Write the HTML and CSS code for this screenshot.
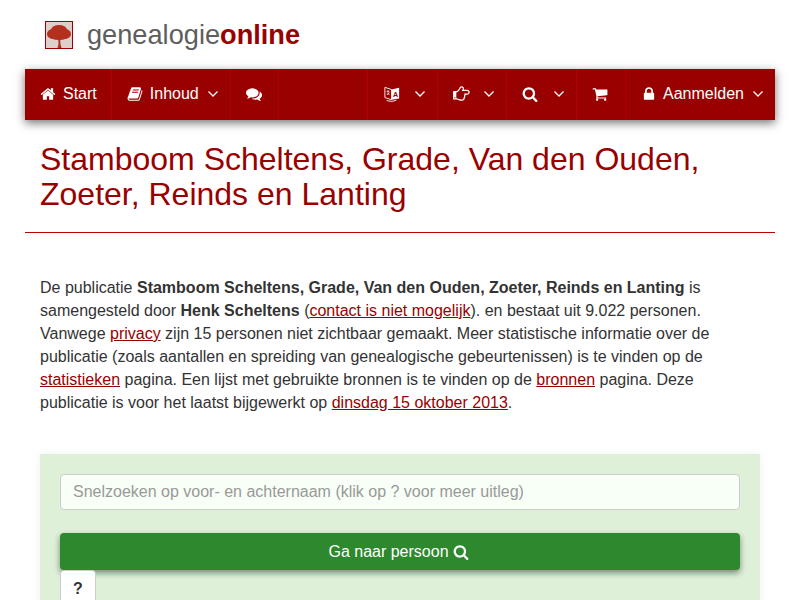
FILE: index.html
```html
<!DOCTYPE html>
<html lang="nl">
<head>
    <meta charset="UTF-8">
    <meta name="viewport" content="width=device-width, initial-scale=1.0">
    <title>Stamboom Scheltens, Grade, Van den Ouden, Zoeter, Reinds en Lanting</title>
    <link rel="stylesheet" href="styles.css">
</head>

<body>
    <div class="container">
        <!-- Logo -->
        <div class="brand">
            <svg class="brand-logo" viewBox="0 0 26 26">
                <rect width="26" height="26" fill="#dfcfcb"/>
                <g class="tree">
                    <ellipse cx="13" cy="8" rx="8" ry="5"/>
                    <ellipse cx="7" cy="12" rx="6" ry="5"/>
                    <ellipse cx="19" cy="12" rx="6" ry="5"/>
                    <ellipse cx="13" cy="14" rx="10" ry="4"/>
                    <path d="M12 14h2l.5 8 1 4h-4l1-4z"/>
                </g>
            </svg>
            <span class="brand-name">genealogie<b>online</b></span>
        </div>

        <!-- Navigation -->
        <nav class="navbar">
            <a class="nav-item nav-start">
                <svg class="icon" viewBox="0 0 1792 1792"><path d="M1472 992v480q0 26-19 45t-45 19h-384v-384h-256v384h-384q-26 0-45-19t-19-45v-480q0-1 .5-3t.5-3l575-474 575 474q1 2 1 6zm223-69l-62 74q-8 9-21 11h-3q-13 0-21-7l-692-577-692 577q-12 8-24 7-13-2-21-11l-62-74q-8-10-7-23.5t11-21.5l719-599q32-26 76-26t76 26l244 204v-195q0-14 9-23t23-9h192q14 0 23 9t9 23v408l219 182q10 8 11 21.5t-7 23.5z"/></svg>
                <span class="nav-label">Start</span>
            </a>
            <a class="nav-item">
                <svg class="icon" viewBox="0 0 1792 1792"><path d="M1703 478q40 57 18 129l-275 906q-19 64-76.5 107.5t-122.5 43.5h-923q-77 0-148.5-53.5t-99.5-131.5q-24-67-2-127 0-4 3-27t4-37q1-8-3-21.5t-3-19.5q2-11 8-21t16.5-23.5 16.5-23.5q23-38 45-91.5t30-91.5q3-10 .5-30t-.5-28q3-11 17-28t17-23q21-36 42-92t25-90q1-9-2.5-32t.5-28q4-13 22-30.5t22-22.5q19-26 42.5-84.5t27.5-96.5q1-8-3-25.5t-2-26.5q2-8 9-18t18-23 17-21q8-12 16.5-30.5t15-35 16-36 19.5-32 26.5-23.5 36-11.5 47.5 5.5l-1 3q38-9 51-9h761q74 0 114 56t18 130l-274 906q-36 119-71.5 153.5t-128.5 34.5h-869q-27 0-38 15-11 16-1 43 24 70 144 70h923q29 0 56-15.5t35-41.5l300-987q7-22 5-57 38 15 59 43zm-1064 2q-4 13 2 22.5t20 9.5h608q13 0 25.5-9.5t16.5-22.5l21-64q4-13-2-22.5t-20-9.5h-608q-13 0-25.5 9.5t-16.5 22.5zm-83 256q-4 13 2 22.5t20 9.5h608q13 0 25.5-9.5t16.5-22.5l21-64q4-13-2-22.5t-20-9.5h-608q-13 0-25.5 9.5t-16.5 22.5z"/></svg>
                <span class="nav-label">Inhoud</span>
                <svg class="caret" viewBox="0 0 12 8"><path d="M1.500 1.500L6 6l4.500-4.500"/></svg>
            </a>
            <a class="nav-item nav-comments">
                <svg class="icon" viewBox="0 0 1792 1792"><path d="M1408 768q0 139-94 257t-256.500 186.500-353.500 68.500q-86 0-176-16-124 88-278 128-36 9-86 16h-3q-11 0-20.500-8t-11.500-21q-1-3-1-6.500t.5-6.500 2-6l2.500-5 3.500-5.500 4-5 4.500-5 4-4.500q5-6 23-25t26-29.500 22.500-29 25-38.500 20.500-44q-124-72-195-177t-71-224q0-139 94-257t256.500-186.500 353.500-68.500 353.500 68.500 256.500 186.500 94 257zm384 256q0 120-71 224.500t-195 176.500q10 24 20.500 44t25 38.500 22.500 29 26 29.500 23 25q1 1 4 4.500t4.500 5 4 5 3.500 5.500l2.500 5 2 6 .5 6.500-1 6.500q-3 14-13 22t-22 7q-50-7-86-16-154-40-278-128-90 16-176 16-271 0-472-132 58 4 88 4 161 0 309-45t264-129q125-92 192-212t67-254q0-77-23-152 129 71 204 178t75 230z"/></svg>
            </a>

            <a class="nav-item nav-lang">
                <svg class="icon icon-lang" viewBox="0 0 18 20">
                    <path class="lang-page" d="M1 2.500l7.500 2.500v11.500L1 14z"/>
                    <path class="lang-page" d="M3 7h3M4.500 6v1M3.500 11l2.500-3M4 8.500l2 2.500M3 17.500q6 2 11-.500"/>
                    <path class="lang-solid" d="M8.500 5L17 3v12l-8.500 1.500z"/>
                    <text class="lang-letter" x="10" y="13">A</text>
                </svg>
                <svg class="caret" viewBox="0 0 12 8"><path d="M1.500 1.500L6 6l4.500-4.500"/></svg>
            </a>
            <a class="nav-item">
                <svg class="icon icon-hand" viewBox="0 0 1792 1792"><path d="M256 1344q0-26-19-45t-45-19-45 19-19 45 19 45 45 19 45-19 19-45zm1376-576q0-51-39-89.500t-89-38.500h-576q0-20 15-48.500t33-55 33-68 15-84.500q0-67-44.500-97.500t-115.500-30.500q-24 0-90 139-24 44-37 65-40 64-112 145-71 81-101 106-69 57-140 57h-32v640h32q72 0 167 32t193.500 64 179.500 32q189 0 189-167 0-26-5-56 30-16 47.500-52.500t17.500-73.500-18-69q53-50 53-119 0-25-10-55.500t-25-47.500h331q52 0 90-38t38-90zm128-1q0 105-75.500 181t-180.500 76h-169q-4 62-37 119 3 21 3 43 0 101-60 178 1 139-85 219.500t-227 80.500q-133 0-322-69-164-59-223-59h-288q-53 0-90.500-37.500t-37.500-90.500v-640q0-53 37.500-90.500t90.500-37.500h288q10 0 21.500-4.500t23.500-14 22.500-18 24-22.500 20.500-21.500 19-21.500 14-17q65-74 100-129 13-21 33-62t37-72 40.500-63 55-49.500 69.500-17.500q125 0 206.500 67t81.500 189q0 68-22 128h374q104 0 180 76t76 179z"/></svg>
                <svg class="caret" viewBox="0 0 12 8"><path d="M1.500 1.500L6 6l4.500-4.500"/></svg>
            </a>
            <a class="nav-item">
                <svg class="icon" viewBox="0 0 1792 1792"><path d="M1216 832q0-185-131.500-316.500t-316.500-131.500-316.500 131.500-131.500 316.500 131.500 316.500 316.500 131.500 316.500-131.500 131.500-316.500zm512 832q0 52-38 90t-90 38q-54 0-90-38l-343-342q-179 124-399 124-143 0-273.500-55.500t-225-150-150-225-55.500-273.500 55.500-273.500 150-225 225-150 273.500-55.500 273.500 55.500 225 150 150 225 55.500 273.500q0 220-124 399l343 343q37 37 37 90z"/></svg>
                <svg class="caret" viewBox="0 0 12 8"><path d="M1.500 1.500L6 6l4.500-4.500"/></svg>
            </a>
            <a class="nav-item nav-cart">
                <svg class="icon" viewBox="0 0 1792 1792"><path d="M704 1536q0 52-38 90t-90 38-90-38-38-90 38-90 90-38 90 38 38 90zm896 0q0 52-38 90t-90 38-90-38-38-90 38-90 90-38 90 38 38 90zm128-1088v512q0 24-16.500 42.500t-40.500 21.500l-1044 122q13 60 13 70 0 16-24 64h920q26 0 45 19t19 45-19 45-45 19h-1024q-26 0-45-19t-19-45q0-11 8-31.500t16-36 21.500-40 15.500-29.500l-177-823h-204q-26 0-45-19t-19-45 19-45 45-19h256q16 0 28.500 6.500t19.500 15.500 13 24.500 8 26 5.500 29.500 4.500 26h1201q26 0 45 19t19 45z"/></svg>
            </a>
            <a class="nav-item nav-login">
                <svg class="icon" viewBox="0 0 1792 1792"><path d="M640 768h512v-192q0-106-75-181t-181-75-181 75-75 181v192zm832 96v576q0 40-28 68t-68 28h-960q-40 0-68-28t-28-68v-576q0-40 28-68t68-28h32v-192q0-184 132-316t316-132 316 132 132 316v192h32q40 0 68 28t28 68z"/></svg>
                <span class="nav-label nav-label-login">Aanmelden</span>
                <svg class="caret" viewBox="0 0 12 8"><path d="M1.500 1.500L6 6l4.500-4.500"/></svg>
            </a>
        </nav>

        <h1 class="page-title">Stamboom Scheltens, Grade, Van den Ouden, Zoeter, Reinds en Lanting</h1>

        <p class="intro">
            De publicatie <b>Stamboom Scheltens, Grade, Van den Ouden, Zoeter, Reinds en Lanting</b> is
            samengesteld door <b>Henk Scheltens</b> (<a href="#">contact is niet mogelijk</a>). en bestaat uit 9.022 personen.
            Vanwege <a href="#">privacy</a> zijn 15 personen niet zichtbaar gemaakt. Meer statistische informatie over de
            publicatie (zoals aantallen en spreiding van genealogische gebeurtenissen) is te vinden op de
            <a href="#">statistieken</a> pagina. Een lijst met gebruikte bronnen is te vinden op de <a href="#">bronnen</a> pagina. Deze
            publicatie is voor het laatst bijgewerkt op <a href="#">dinsdag 15 oktober 2013</a>.
        </p>

        <!-- Quick search -->
        <form class="search-panel">
            <input class="search-input" type="text" placeholder="Snelzoeken op voor- en achternaam (klik op ? voor meer uitleg)">
            <button class="search-submit" type="button">
                Ga naar persoon
                <svg class="icon" viewBox="0 0 1792 1792"><path d="M1216 832q0-185-131.500-316.500t-316.500-131.500-316.500 131.500-131.500 316.500 131.500 316.500 316.500 131.500 316.500-131.500 131.500-316.500zm512 832q0 52-38 90t-90 38q-54 0-90-38l-343-342q-179 124-399 124-143 0-273.500-55.500t-225-150-150-225-55.500-273.500 55.500-273.500 150-225 225-150 273.500-55.500 273.500 55.500 225 150 150 225 55.500 273.500q0 220-124 399l343 343q37 37 37 90z"/></svg>
            </button>
            <button class="search-help" type="button">?</button>
        </form>
    </div>
</body>
</html>
```

FILE: styles.css
```css
/* General Styles */
html, body {
    height: 100%;
    overflow: hidden;
}

body {
    font-family: "Liberation Sans", Arial, sans-serif;
    font-size: 16px;
    line-height: 23px;
    background-color: #fff;
    color: #333;
    margin: 0;
    padding: 0;
}

.container {
    width: 750px;
    margin: 0 auto;
}

/* Logo */
.brand {
    display: flex;
    align-items: center;
    height: 69px;
    padding-left: 20px;
}

.brand-logo {
    width: 28px;
    height: 28px;
    box-sizing: border-box;
    border: 1px solid #990000;
    margin-right: 14px;
}

.tree {
    fill: #b3301f;
    filter: blur(0.4px);
}

.brand-name {
    font-size: 27.2px;
    color: #5e5e5e;
}

.brand-name b {
    color: #990000;
}

/* Navigation */
.navbar {
    display: flex;
    height: 51px;
    background-color: #990000;
    box-shadow: 0 3px 9px rgba(0, 0, 0, 0.55);
    color: #fff;
}

.nav-item {
    display: flex;
    align-items: center;
    padding: 0 11px 2px 15px;
    border-right: 1px solid #b00000;
}

.nav-start {
    padding-right: 14px;
}

.nav-comments {
    padding-right: 16px;
}

.nav-lang {
    margin-left: auto;
    padding-left: 16px;
    border-left: 1px solid #b00000;
}

.nav-cart {
    padding-right: 17px;
}

.nav-login {
    border-right: none;
}

.nav-label {
    margin-left: 7px;
}

.nav-label-login {
    margin-left: 6px;
}

.icon {
    width: 16px;
    height: 16px;
    fill: currentColor;
    flex: none;
}

.icon-lang {
    height: 18px;
}

.icon-hand {
    width: 17px;
    height: 17px;
    margin-right: -2px;
}

.lang-page {
    fill: none;
    stroke: #fff;
    stroke-width: 1;
}

.lang-solid {
    fill: #fff;
}

.lang-letter {
    font-size: 8px;
    font-weight: bold;
    fill: #990000;
}

.caret {
    width: 12px;
    height: 8px;
    margin-left: 8px;
    fill: none;
    stroke: #fff;
    stroke-width: 1.3;
    flex: none;
}

.icon + .caret {
    margin-left: 15px;
}

.nav-lang .icon + .caret {
    margin-left: 14px;
}

/* Title */
.page-title {
    font-size: 32px;
    line-height: 35px;
    font-weight: normal;
    color: #990000;
    margin: 0;
    padding: 22px 15px 20px;
    border-bottom: 1px solid #bb0000;
}

.intro {
    margin: 43px 15px 0;
}

.intro a {
    color: #990000;
    text-decoration: underline;
}

/* Quick search */
.search-panel {
    margin: 40px 15px 0;
    padding: 20px;
    background-color: #dff0d8;
    box-shadow: 0 0 8px rgba(0, 0, 0, 0.06);
}

.search-input {
    display: block;
    width: 100%;
    height: 36px;
    box-sizing: border-box;
    padding: 6px 12px;
    font: inherit;
    color: #333;
    background-color: #f8fff6;
    border: 1px solid #ccc;
    border-radius: 4px;
}

.search-input::placeholder {
    color: #999;
    opacity: 1;
}

.search-submit {
    display: flex;
    align-items: center;
    justify-content: center;
    width: 100%;
    height: 37px;
    margin-top: 23px;
    padding: 0 3px 0 0;
    font: inherit;
    color: #fff;
    background-color: #2d882e;
    border: none;
    border-radius: 4px;
    box-shadow: 0 3px 6px rgba(0, 0, 0, 0.45);
}

.search-submit .icon {
    margin-left: 4px;
}

.search-help {
    display: block;
    width: 36px;
    height: 36px;
    padding: 0;
    font: inherit;
    font-weight: bold;
    color: #333;
    background-color: #fff;
    border: 1px solid #ccc;
    border-radius: 4px;
}
```
